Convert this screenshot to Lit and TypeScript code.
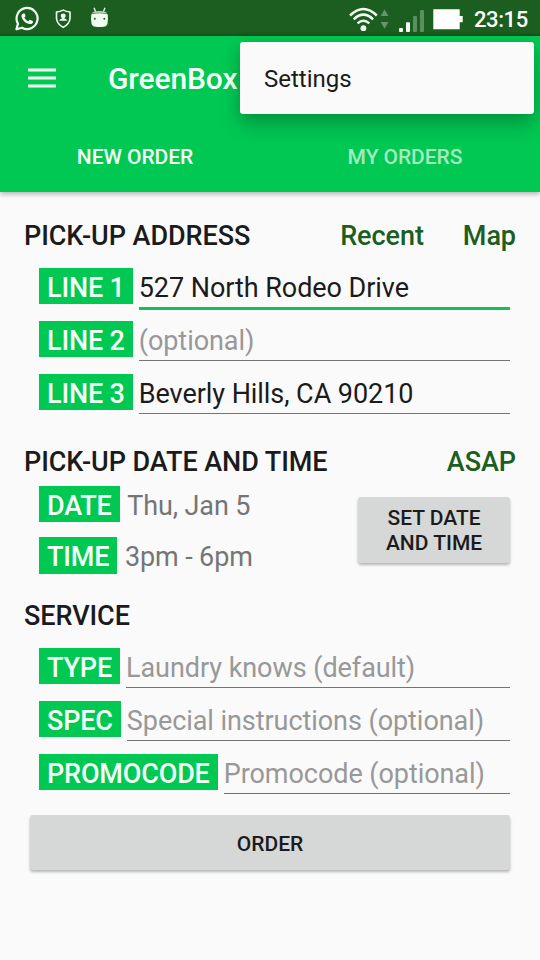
import { LitElement, html, css, nothing } from "lit";
import { customElement } from "lit/decorators.js";

@customElement("status-bar")
class StatusBar extends LitElement {
  static styles = css`
    :host { display: flex; height: 36px; background: linear-gradient(#1b5e20 33px, #174f1b); color: #fff; }
    svg { display: block; flex: 1; height: 36px; }
    .clock { flex: none; width: 66px; font: 500 22px/40px Roboto, sans-serif; letter-spacing: -.4px; white-space: nowrap; }
  `;
  render() {
    return html`
      <svg viewBox="0 0 474 36" fill="#f1fff3">
        <g fill="none" stroke="#f1fff3" stroke-width="2.2">
          <path d="M16.4 29.3L18 23.8A10.5 10.5 0 1 1 22 27.7Z" stroke-linejoin="round" />
          <path d="M63.2 10.1Q66.5 11.7 70 12V18.5Q69.5 24 63.2 27.4Q57 24 56.5 18.5V12Q60 11.7 63.2 10.1Z" stroke-width="1.6" stroke-linejoin="round" />
        </g>
        <path d="M23.4 13.4C22.4 13.4 21.4 14.7 21.5 16.3C21.8 19.8 26 24 29.9 24.1C31.7 24.1 33.2 22.9 33.1 21.4C32.5 20.8 30.6 19.8 29.9 19.7C29.3 19.9 28.9 21.1 28.3 21.2C26.9 21 24.9 19 24.4 17.8C24.5 17.2 25.5 16.7 25.5 16C25.4 15.2 24.7 13.5 24.4 13.4Z" />
        <path d="M60.7 15.8a2.5 2.3 0 1 1 5 0q0 1.2-1.3 2.1v.5q2.6.4 2.6 2.4h-7.6q0-2 2.6-2.4v-.5q-1.3-.9-1.3-2.1Z" />
        <path d="M91.3 14.3Q99.5 12.3 107.7 14.3Q108.3 19 107.5 23.5Q107 26.5 103.5 26.8Q99.5 27.3 95.5 26.8Q92 26.5 91.5 23.5Q90.7 19 91.3 14.3Z" />
        <path d="M91.6 13.6Q92.5 11.1 99.5 11.1T107.4 13.6Q99.5 11.7 91.6 13.6Z" opacity=".75" />
        <path d="M94 7.7L95.5 11.5M105 7.7L103.5 11.5" stroke="#f1fff3" stroke-width="1.3" />
        <g fill="#1b5e20"><circle cx="94.8" cy="18.7" r="1" /><circle cx="104.3" cy="18.7" r="1" /></g>
        <circle cx="363.4" cy="28.2" r="2.9" />
        <g fill="none" stroke="#f1fff3" stroke-width="2.5">
          <path d="M350 15.5Q363.4 2.5 376.8 15.5" />
          <path d="M353.7 19.3Q363.4 10 373.1 19.3" />
          <path d="M357.5 23.4Q363.4 18 369.3 23.4" />
        </g>
        <path d="M380.7 16L384.5 9.4L388.5 16ZM380.7 22L384.5 28.7L388.5 22Z" opacity=".35" />
        <rect x="399" y="28" width="4" height="4" rx="1" />
        <rect x="406" y="22.3" width="4" height="9.7" rx="1" />
        <g opacity=".3"><rect x="413" y="16" width="4" height="16" rx="1" /><rect x="420" y="10" width="4" height="22" rx="1" /></g>
        <path d="M433.3 9.3H459.7V16H462.7V22.3H459.7V29.3H433.3Z" fill="#fff" />
      </svg>
      <div class="clock">23:15</div>
    `;
  }
}

@customElement("field-row")
class FieldRow extends LitElement {
  static properties = {
    label: {}, value: {}, hint: {}, focused: { type: Boolean }, plain: { type: Boolean },
  };
  declare label: string;
  declare value?: string;
  declare hint?: string;
  declare focused: boolean;
  declare plain: boolean;
  static styles = css`
    :host { display: flex; height: 53px; font: 400 27px/40px Roboto, sans-serif; letter-spacing: -.06px; white-space: nowrap; }
    .chip { flex: none; box-sizing: border-box; height: 36.5px; padding: 0 8px; background: #00c853; color: #f4fff6; font-weight: 500; letter-spacing: -.16px; }
    .field { flex: 1; box-sizing: border-box; height: 40.3px; margin-left: 6px; border-bottom: 1.5px solid #747474; color: #1b1b1b; }
    .hint { color: #989898; }
    .focused { height: 42.3px; border-bottom: 3px solid #14bf58; }
    .plain { border: 0; margin-left: 7.6px; color: #757575; letter-spacing: -.12px; }
  `;
  render() {
    const kind = this.focused ? "focused" : this.plain ? "plain" : this.hint ? "hint" : "";
    return html`<div class="chip">${this.label}</div><div class="field ${kind}">${this.value ?? this.hint ?? nothing}</div>`;
  }
}

@customElement("app-root")
class AppRoot extends LitElement {
  static styles = css`
    :host { display: flex; flex-direction: column; position: relative; width: 540px; height: 960px; overflow: hidden; background: #fafafa; color: #1b1b1b; font-family: Roboto, sans-serif; font-weight: 500; white-space: nowrap; }
    .appbar { height: 156px; background: #00c853; box-shadow: 0 2px 5px rgba(0,0,0,.3); color: #f4fff6; }
    .toolbar { display: flex; align-items: center; height: 84px; padding-left: 28px; }
    .menu { width: 28px; height: 20px; margin-right: 52px; }
    .title { font-size: 30px; line-height: 36px; padding-top: 2px; letter-spacing: -.12px; }
    .tabs { display: grid; grid-template-columns: 1fr 1fr; font-size: 21px; line-height: 74px; letter-spacing: -.06px; text-align: center; }
    .idle { color: #a5eabf; }
    .popup { position: absolute; left: 240px; top: 42px; width: 294px; height: 72px; box-sizing: border-box; padding-left: 24px; border-radius: 3px; background: #fafafa; box-shadow: 0 12px 20px rgba(0,0,0,.2), 0 2px 14px rgba(0,0,0,.1); font: 400 24px/74px Roboto, sans-serif; }
    .heading { display: flex; padding: 0 24px; font-size: 27px; line-height: 32px; letter-spacing: -.06px; }
    .grow { flex: 1; }
    .link { color: #1b5e20; margin-left: 39px; }
    .rows { padding: 0 30px 0 39px; }
    .address { padding-top: 28px; }
    .pickup { padding-top: 15.6px; }
    .date { padding-top: 19.4px; }
    .when { display: flex; padding-top: 8px; height: 114px; }
    .slots { flex: 1; }
    .slots field-row { height: 51.5px; }
    .service { padding-top: 15.6px; }
    .btn { background: #d6d7d7; border-radius: 3px; box-shadow: 0 2px 3px rgba(0,0,0,.28); text-align: center; font-size: 21px; }
    .set { width: 152px; height: 66px; box-sizing: border-box; margin-top: 11px; padding-top: 9.4px; line-height: 24.6px; }
    .order { margin: 8px 30px 0; height: 55px; line-height: 58px; }
  `;
  render() {
    return html`
      <status-bar></status-bar>
      <div class="appbar">
        <div class="toolbar">
          <svg class="menu" viewBox="0 0 28 20" fill="#f1fff3"><path d="M0 .5h28v3H0zM0 8.5h28v3H0zM0 16.5h28v3H0z" /></svg>
          <div class="title">GreenBox</div>
        </div>
        <div class="tabs"><div>NEW ORDER</div><div class="idle">MY ORDERS</div></div>
      </div>
      <div class="heading address"><div class="grow">PICK-UP ADDRESS</div><div class="link">Recent</div><div class="link">Map</div></div>
      <div class="rows pickup">
        <field-row label="LINE 1" value="527 North Rodeo Drive" focused></field-row>
        <field-row label="LINE 2" hint="(optional)"></field-row>
        <field-row label="LINE 3" value="Beverly Hills, CA 90210"></field-row>
      </div>
      <div class="heading date"><div class="grow">PICK-UP DATE AND TIME</div><div class="link">ASAP</div></div>
      <div class="rows when">
        <div class="slots">
          <field-row label="DATE" value="Thu, Jan 5" plain></field-row>
          <field-row label="TIME" value="3pm - 6pm" plain></field-row>
        </div>
        <div class="btn set">SET DATE<br />AND TIME</div>
      </div>
      <div class="heading">SERVICE</div>
      <div class="rows service">
        <field-row label="TYPE" hint="Laundry knows (default)"></field-row>
        <field-row label="SPEC" hint="Special instructions (optional)"></field-row>
        <field-row label="PROMOCODE" hint="Promocode (optional)"></field-row>
      </div>
      <div class="btn order">ORDER</div>
      <div class="popup">Settings</div>
    `;
  }
}
